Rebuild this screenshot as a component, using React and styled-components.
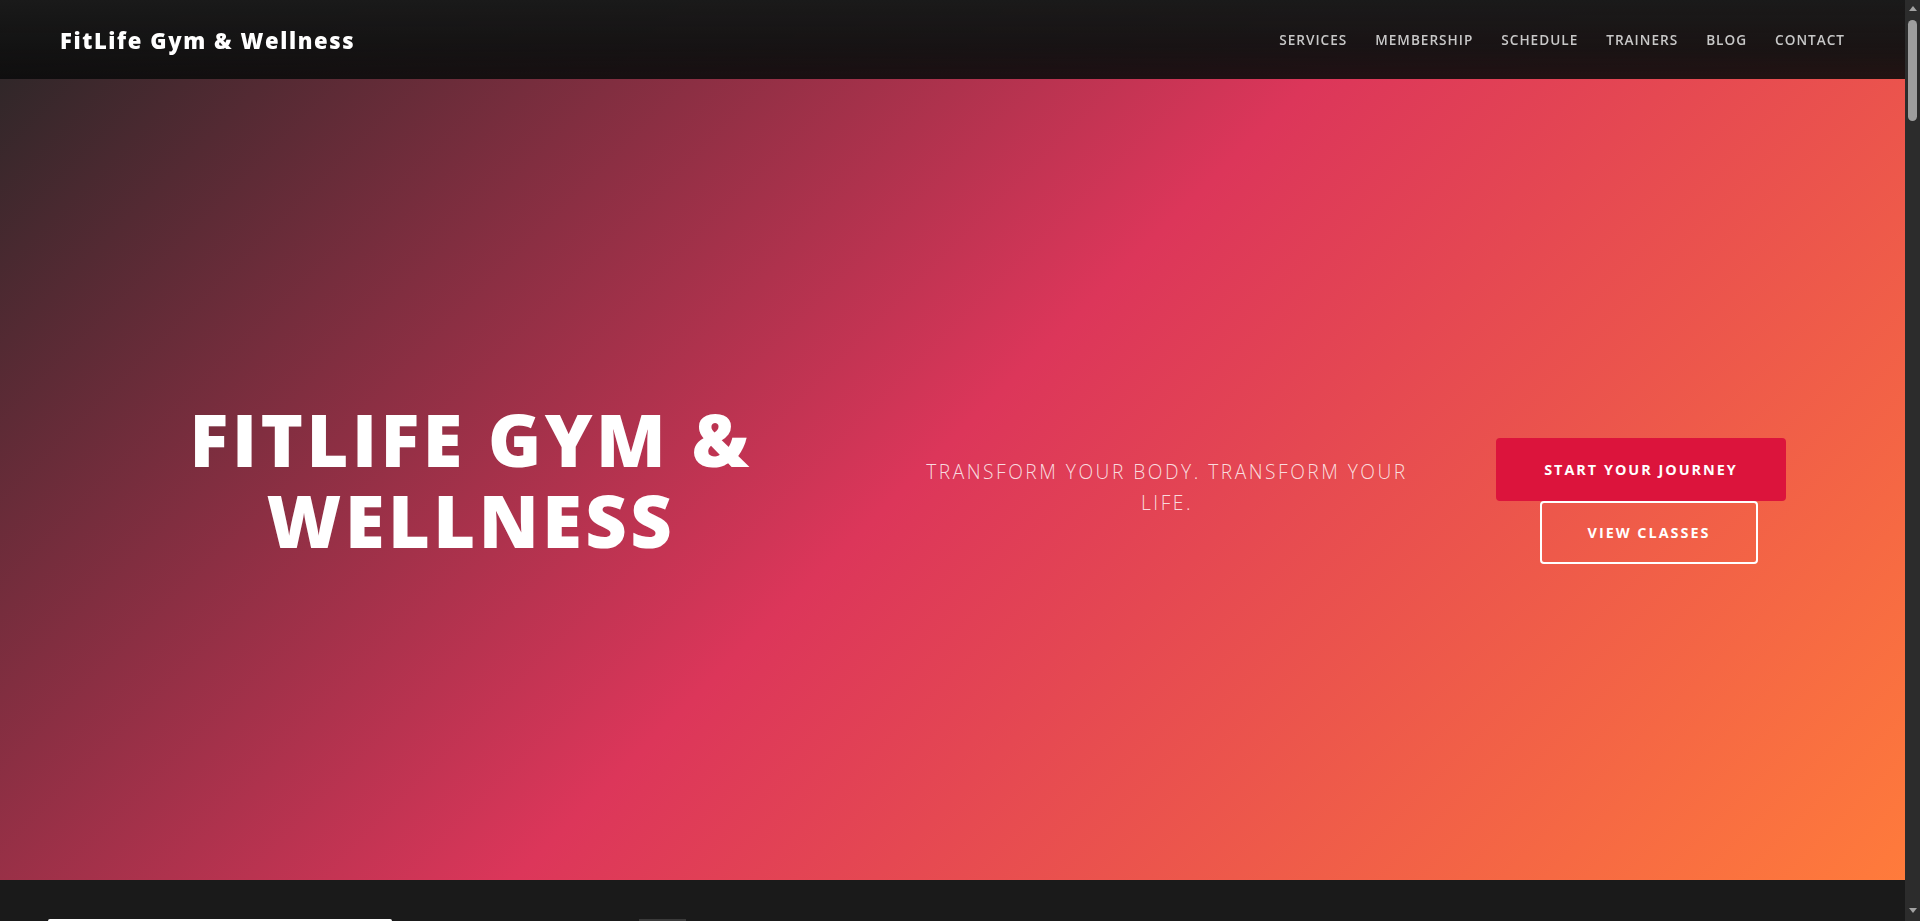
import styled, { createGlobalStyle } from 'styled-components'

const GlobalStyle = createGlobalStyle`
  html {
    overflow: hidden;
  }
  body {
    margin: 0;
    background: #1a1a1a;
    font-family: 'Open Sans', 'Liberation Sans', sans-serif;
    color: #fff;
  }
  * {
    box-sizing: border-box;
  }
`

const Page = styled.div`
  margin-right: 15px;
`

const ScrollTrack = styled.div`
  position: fixed;
  top: 0;
  right: 0;
  bottom: 0;
  width: 15px;
  z-index: 20;
  background: #2c2c2c;
  display: flex;
  flex-direction: column;
  align-items: center;
`

const Arrow = styled.div`
  width: 0;
  height: 0;
  margin: ${(p) => (p.$down ? 'auto 0 8px' : '6px 0 0')};
  border-left: 4px solid transparent;
  border-right: 4px solid transparent;
  ${(p) => (p.$down ? 'border-top: 5px solid #a3a3a3;' : 'border-bottom: 5px solid #a3a3a3;')}
`

const Thumb = styled.div`
  margin-top: 9px;
  width: 9px;
  height: 101px;
  border-radius: 5px;
  background: #9e9e9e;
`

const Header = styled.header`
  position: fixed;
  top: 0;
  left: 0;
  right: 15px;
  z-index: 10;
  height: 79px;
  padding: 0 60px;
  display: flex;
  align-items: center;
  justify-content: space-between;
  background: linear-gradient(180deg, rgba(26, 26, 26, 1) 0%, rgba(18, 18, 18, 0.97) 60%, rgba(12, 12, 12, 0.9) 100%);
`

const Logo = styled.div`
  font-size: 22px;
  font-weight: 800;
  letter-spacing: 1.6px;
  color: #fff;
`

const Nav = styled.nav`
  display: flex;
  gap: 28px;
`

const NavLink = styled.a`
  font-size: 13.6px;
  font-weight: 600;
  letter-spacing: 1px;
  text-transform: uppercase;
  color: #c8c8c8;
  text-decoration: none;
`

const Hero = styled.section`
  height: 880px;
  padding: 79px 63px 0 48px;
  display: grid;
  grid-template-columns: 846px 514px 402px;
  column-gap: 16px;
  align-items: center;
  background: linear-gradient(135deg, #262626 0%, #dc365a 50%, #ff7b3b 100%);
`

const Title = styled.h1`
  margin: 0;
  text-align: center;
  font-size: 72px;
  line-height: 81px;
  font-weight: 800;
  letter-spacing: 3.5px;
  text-transform: uppercase;
`

const Tagline = styled.p`
  margin: 16px 0 0;
  text-align: center;
  font-size: 19.2px;
  line-height: 1.6;
  font-weight: 300;
  letter-spacing: 2.5px;
  text-transform: uppercase;
  color: rgba(255, 255, 255, 0.82);
`

const Actions = styled.div`
  margin-top: 43px;
  display: flex;
  flex-wrap: wrap;
  justify-content: center;
`

const Button = styled.a`
  display: inline-block;
  padding: 18px 46px;
  border: 2px solid ${(p) => (p.$outline ? '#fff' : '#dc143c')};
  border-radius: 4px;
  background: ${(p) => (p.$outline ? 'transparent' : '#dc143c')};
  color: #fff;
  font-size: 14.4px;
  line-height: 23px;
  font-weight: 700;
  letter-spacing: 2px;
  text-transform: uppercase;
  text-decoration: none;
  margin-left: ${(p) => (p.$outline ? '16px' : '0')};
`

const Services = styled.section`
  padding: 39px 48px 80px;
  display: grid;
  grid-template-columns: 344px 47px;
  column-gap: 247px;
  align-items: start;
`

const Card = styled.div`
  height: 360px;
  background: #fff;
  border-radius: 2px;
`

const Tag = styled.div`
  height: 40px;
  background: #3a3a3a;
`

const links = ['Services', 'Membership', 'Schedule', 'Trainers', 'Blog', 'Contact']

export default function App() {
  return (
    <>
      <GlobalStyle />
      <Page>
        <Header>
          <Logo>FitLife Gym &amp; Wellness</Logo>
          <Nav>
            {links.map((l) => (
              <NavLink key={l} href="#">
                {l}
              </NavLink>
            ))}
          </Nav>
        </Header>
        <Hero>
          <Title>FitLife Gym &amp; Wellness</Title>
          <Tagline>Transform your body. Transform your life.</Tagline>
          <Actions>
            <Button href="#">Start Your Journey</Button>
            <Button href="#" $outline>
              View Classes
            </Button>
          </Actions>
        </Hero>
        <Services>
          <Card />
          <Tag />
        </Services>
      </Page>
      <ScrollTrack>
        <Arrow />
        <Thumb />
        <Arrow $down />
      </ScrollTrack>
    </>
  )
}
